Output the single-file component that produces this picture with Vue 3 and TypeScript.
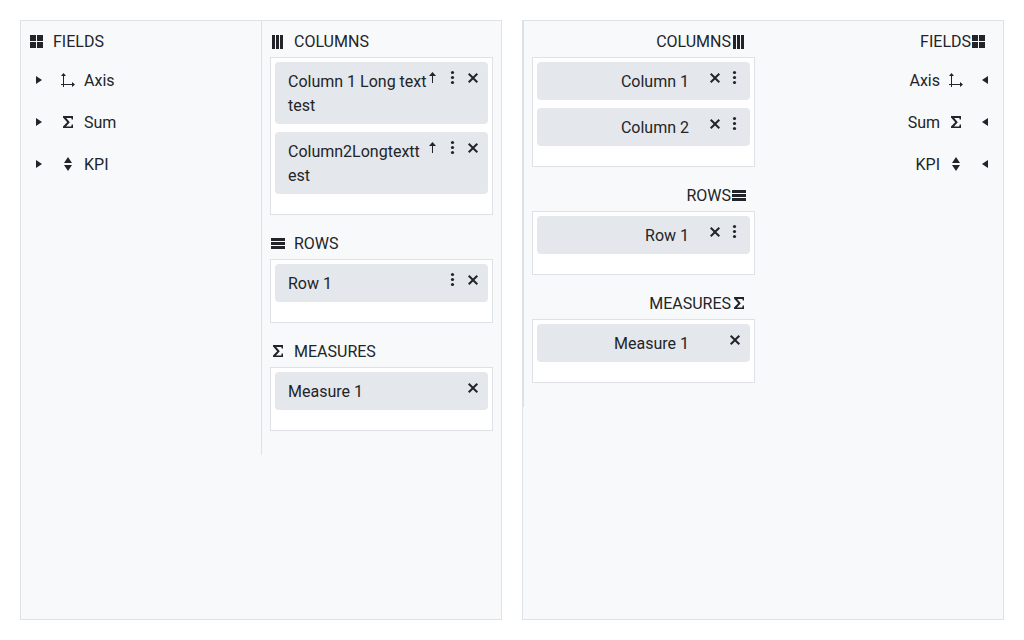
<script setup lang="ts">
import { defineComponent, h } from 'vue'

type IconName = 'grid' | 'columns' | 'rows' | 'sigma' | 'axis' | 'kpi' | 'caret' | 'sort' | 'menu' | 'close'
type Action = 'sort' | 'menu' | 'close'

interface Item {
  text: string
  actions: Action[]
}
interface Section {
  title: string
  icon: IconName
  items: Item[]
}
interface Panel {
  id: string
  mirrored: boolean
  sections: Section[]
}

const shapes: Record<IconName, string> = {
  grid: 'M1 2h6v6h-6zM8 2h6v6h-6zM1 9h6v6h-6zM8 9h6v6h-6z',
  columns: 'M2 2h3v14h-3zM6 2h3v14h-3zM10 2h3v14h-3z',
  rows: 'M1 3h14v3h-14zM1 7h14v3h-14zM1 11h14v3h-14z',
  sigma: 'M3 2h10v3.6h-1.3L11.3 4H6.2l3.6 4.2L6 12.4h5.3l.4-1.8H13V14H3v-1.4l4.2-4.4L3 3.4z',
  axis: 'M3 3h1v9h8v-2l3 2.5-3 2.5v-2H4v2H3v-2H1v-1h2zM1 4l2.5-3L6 4z',
  kpi: 'M8 1l4 6H4zM4 9h8l-4 6z',
  caret: 'M5 4l6 4-6 4z',
  sort: 'M5 4h1v9h-1zM2 6l3.5-4L9 6z',
  menu: 'M4 1h3v3h-3zM4 6h3v3h-3zM4 11h3v3h-3z',
  close: 'M1 4.4L2.4 3 6 6.6 9.6 3 11 4.4 7.4 8 11 11.6 9.6 13 6 9.4 2.4 13 1 11.6 4.6 8z',
}

const dots = [2.5, 7.5, 12.5]

const Icon = defineComponent({
  props: { name: { type: String, required: true }, narrow: Boolean },
  setup(props) {
    return () => {
      const width = props.narrow ? 12 : 16
      const body =
        props.name === 'menu'
          ? dots.map((cy) => h('circle', { cx: 5.5, cy, r: 1.6 }))
          : h('path', { d: shapes[props.name as IconName] })
      return h(
        'svg',
        { width, height: 16, viewBox: `0 0 ${width} 16`, fill: 'currentColor', 'aria-hidden': 'true' },
        body,
      )
    }
  },
})

const actionLabels: Record<Action, string> = { sort: 'Sort', menu: 'Options', close: 'Remove' }

const fields: { text: string; icon: IconName }[] = [
  { text: 'Axis', icon: 'axis' },
  { text: 'Sum', icon: 'sigma' },
  { text: 'KPI', icon: 'kpi' },
]

const panels: Panel[] = [
  {
    id: 'start',
    mirrored: false,
    sections: [
      {
        title: 'COLUMNS',
        icon: 'columns',
        items: [
          { text: 'Column 1 Long text test', actions: ['sort', 'menu', 'close'] },
          { text: 'Column2Longtexttest', actions: ['sort', 'menu', 'close'] },
        ],
      },
      { title: 'ROWS', icon: 'rows', items: [{ text: 'Row 1', actions: ['menu', 'close'] }] },
      { title: 'MEASURES', icon: 'sigma', items: [{ text: 'Measure 1', actions: ['close'] }] },
    ],
  },
  {
    id: 'end',
    mirrored: true,
    sections: [
      {
        title: 'COLUMNS',
        icon: 'columns',
        items: [
          { text: 'Column 1', actions: ['close', 'menu'] },
          { text: 'Column 2', actions: ['close', 'menu'] },
        ],
      },
      { title: 'ROWS', icon: 'rows', items: [{ text: 'Row 1', actions: ['close', 'menu'] }] },
      { title: 'MEASURES', icon: 'sigma', items: [{ text: 'Measure 1', actions: ['close'] }] },
    ],
  },
]
</script>

<template>
  <main class="page">
    <div v-for="panel in panels" :key="panel.id" class="configurator" :class="{ mirrored: panel.mirrored }">
      <section class="fields">
        <h2 class="heading"><Icon name="grid" /><span class="caption">FIELDS</span></h2>
        <ul class="tree">
          <li v-for="field in fields" :key="field.text" class="node">
            <button type="button" class="toggle" :aria-label="`Expand ${field.text}`"><Icon name="caret" /></button>
            <span class="label"><Icon :name="field.icon" /><span class="caption">{{ field.text }}</span></span>
          </li>
        </ul>
      </section>
      <div class="settings">
        <section v-for="section in panel.sections" :key="section.title">
          <h2 class="heading"><Icon :name="section.icon" /><span class="caption">{{ section.title }}</span></h2>
          <ul class="target">
            <li v-for="item in section.items" :key="item.text" class="item">
              <span class="text">{{ item.text }}</span>
              <span class="actions">
                <button
                  v-for="action in item.actions"
                  :key="action"
                  type="button"
                  :aria-label="`${actionLabels[action]} ${item.text}`"
                >
                  <Icon :name="action" narrow />
                </button>
              </span>
            </li>
          </ul>
        </section>
      </div>
    </div>
  </main>
</template>

<style>
body {
  margin: 0;
  background: #fff;
}
</style>

<style scoped>
.page {
  box-sizing: border-box;
  display: grid;
  grid-template-columns: 1fr 1fr;
  gap: 20px;
  min-height: 100vh;
  padding: 20px;
  color: #212529;
  font: 16px/24px Roboto, "Liberation Sans", sans-serif;
}
.configurator {
  display: flex;
  align-items: flex-start;
  min-width: 0;
  border: 1px solid #dee2e6;
  background: #f8f9fb;
}
.mirrored,
.mirrored .heading,
.mirrored .node,
.mirrored .label {
  flex-direction: row-reverse;
}
.fields,
.settings {
  box-sizing: border-box;
  width: 50%;
  padding: 7px 8px;
}
.settings {
  display: flex;
  flex-direction: column;
  gap: 15px;
  padding-bottom: 24px;
  border-left: 1px solid #dee2e6;
}
.heading {
  display: flex;
  align-items: center;
  gap: 8px;
  margin: 0;
  font: inherit;
}
.mirrored .heading {
  gap: 0;
  padding-right: 8px;
}
.caption {
  padding-top: 2px;
}
ul {
  margin: 0;
  padding: 0;
  list-style: none;
}
.tree {
  margin-top: 5px;
}
.node {
  display: flex;
  align-items: center;
  gap: 13px;
  height: 42px;
  padding: 0 2px;
}
.label {
  display: flex;
  align-items: center;
  gap: 8px;
}
button {
  display: block;
  padding: 0;
  border: 0;
  background: none;
  color: inherit;
  cursor: pointer;
}
svg,
button :deep(svg) {
  display: block;
  flex: none;
}
.mirrored .toggle {
  transform: scaleX(-1);
}
.target {
  display: flex;
  flex-direction: column;
  gap: 8px;
  margin-top: 3px;
  padding: 4px 4px 20px;
  border: 1px solid #dee2e6;
  background: #fff;
}
.item {
  display: flex;
  align-items: flex-start;
  padding: 8px 9px 6px 13px;
  border-radius: 4px;
  background: #e4e7eb;
}
.text {
  flex: 1;
  min-width: 0;
  overflow-wrap: anywhere;
}
.mirrored .text {
  text-align: right;
}
.actions {
  display: flex;
  flex: none;
  justify-content: flex-end;
  gap: 8px;
  width: 52px;
}
</style>
